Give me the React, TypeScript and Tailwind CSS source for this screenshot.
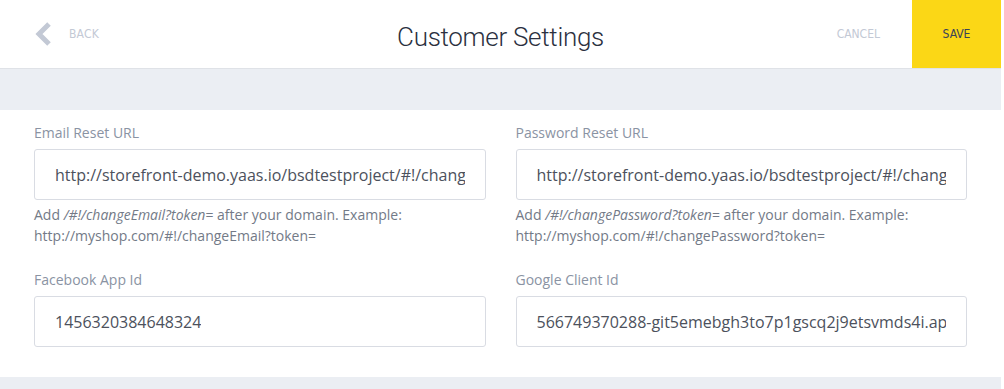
import React from "react";

const fields = [
  {
    label: "Email Reset URL",
    value: "http://storefront-demo.yaas.io/bsdtestproject/#!/changeEmail?token=",
    hint: "/#!/changeEmail?token",
    example: "http://myshop.com/#!/changeEmail?token=",
  },
  {
    label: "Password Reset URL",
    value: "http://storefront-demo.yaas.io/bsdtestproject/#!/changePassword?token=",
    hint: "/#!/changePassword?token",
    example: "http://myshop.com/#!/changePassword?token=",
  },
  { label: "Facebook App Id", value: "1456320384648324" },
  { label: "Google Client Id", value: "566749370288-git5emebgh3to7p1gscq2j9etsvmds4i.apps.googleusercontent.com" },
];

function Field({ f }: { f: (typeof fields)[number] }) {
  return (
    <div className="flex flex-col">
      <label className="text-[14px] leading-[20px] text-[#8a93a3]">{f.label}</label>
      <div className="mt-[6px] h-[51px] border border-[#d9dce3] rounded-[3px] bg-white flex items-center pl-[20px] pr-[20px]">
        <span className="text-[16px] text-[#4c515c] whitespace-nowrap overflow-hidden">{f.value}</span>
      </div>
      {f.hint && (
        <p className="mt-[4px] text-[14px] leading-[21px] text-[#737a87]">
          Add <i>{f.hint}</i>= after your domain. Example:
          <br />
          {f.example}
        </p>
      )}
    </div>
  );
}

export default function App() {
  return (
    <div className="w-[1001px] h-[389px] bg-[#ebeef3] font-['Open_Sans',sans-serif]">
      {/* Header */}
      <header className="h-[69px] bg-white border-b border-[#dfe2e7] flex items-stretch">
        <div className="flex items-center w-[300px] pl-[34px]">
          <svg width="18" height="24" viewBox="0 0 18 24" className="mr-[17px]">
            <path d="M15 2 L5 12 L15 22" fill="none" stroke="#c3c9d5" strokeWidth="5" strokeLinejoin="miter" />
          </svg>
          <span className="text-[12px] text-[#c3c9d5] font-['DejaVu_Sans_Condensed',sans-serif] tracking-[0.2px]">BACK</span>
        </div>
        <h1 className="flex-1 flex items-center justify-center pt-[6px] text-[26px] text-[#2b3040] font-['Roboto',sans-serif] font-light tracking-[-0.3px]">
          Customer Settings
        </h1>
        <div className="w-[300px] flex items-stretch justify-end">
          <button className="px-[32px] text-[12px] text-[#c3c9d5] font-['DejaVu_Sans_Condensed',sans-serif]">CANCEL</button>
          <button className="w-[89px] bg-[#fbd716] text-[12px] text-[#3a4258] font-['DejaVu_Sans_Condensed',sans-serif]">SAVE</button>
        </div>
      </header>

      {/* Form panel */}
      <section className="mt-[41px] h-[267px] bg-white px-[34px] pt-[13px]">
        <div className="grid grid-cols-2 gap-x-[30px] gap-y-[24px]">
          {fields.map((f) => (
            <Field key={f.label} f={f} />
          ))}
        </div>
      </section>
    </div>
  );
}
